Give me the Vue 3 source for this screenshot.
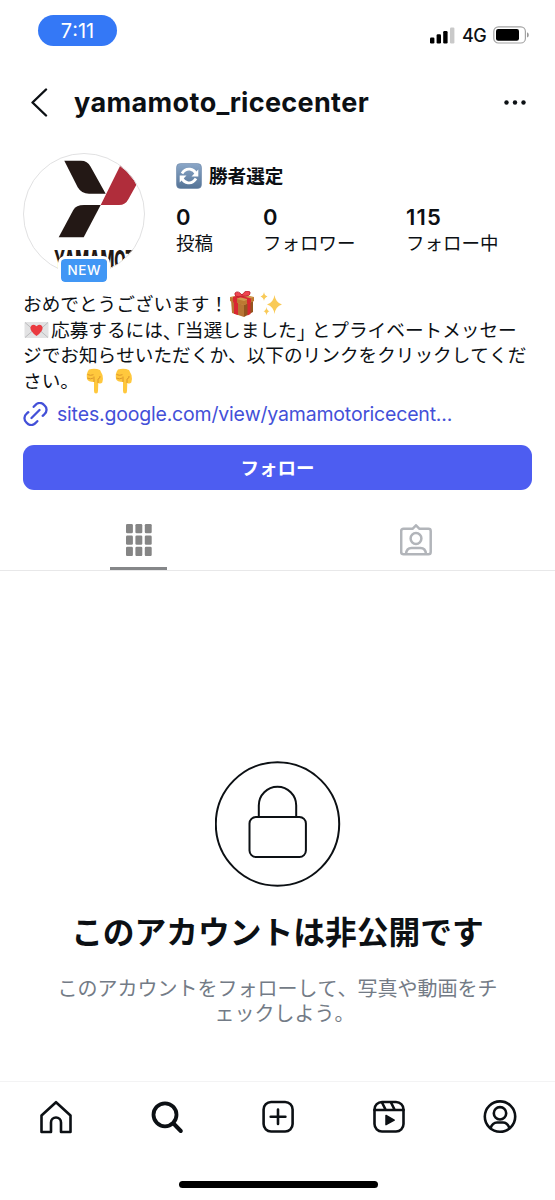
<script setup>
const stats = [
  { value: '0', label: '投稿', cls: 'posts' },
  { value: '0', label: 'フォロワー', cls: 'followers' },
  { value: '115', label: 'フォロー中', cls: 'following' },
]
const cells = [0, 1, 2].flatMap((r) => [0, 1, 2].map((c) => ({ x: c * 9.4, y: r * 11.4 })))
</script>

<template>
  <main class="screen">
    <div class="status">
      <span class="clock">7:11</span>
      <div class="signals">
        <svg class="bars" width="25" height="17" viewBox="0 0 25 17">
          <rect x="0" y="10.5" width="4.4" height="6" rx="1.2" />
          <rect x="6.6" y="7.3" width="4.4" height="9.2" rx="1.2" />
          <rect x="13.2" y="4" width="4.4" height="12.5" rx="1.2" />
          <rect x="20" y="0.5" width="4.4" height="16" rx="1.2" fill="#c9c9c9" />
        </svg>
        <span class="net">4G</span>
        <svg width="37" height="18" viewBox="0 0 37 18">
          <rect x="0.8" y="0.8" width="31.6" height="16.2" rx="4.6" fill="none" stroke="#a3a3a3" stroke-width="1.2" />
          <rect x="3" y="3" width="23" height="11.8" rx="2.2" />
          <path d="M34 6.2q1.8.7 1.8 2.7T34 11.6z" fill="#999" />
        </svg>
      </div>
    </div>

    <header class="head">
      <svg width="18" height="30" viewBox="0 0 18 30" fill="none" stroke="#0c1014" stroke-width="2.4" stroke-linecap="round" stroke-linejoin="round">
        <path d="M15 1.500 1.500 14.500l13.500 13" />
      </svg>
      <h1>yamamoto_ricecenter</h1>
      <svg class="more" width="24" height="6" viewBox="0 0 24 6" fill="#0c1014">
        <circle cx="3.500" cy="2.500" r="2.200" /><circle cx="12" cy="2.500" r="2.200" /><circle cx="20.500" cy="2.500" r="2.200" />
      </svg>
    </header>

    <section class="profile">
      <div class="avatar">
        <svg width="122" height="122" viewBox="0 0 122 122">
          <defs><clipPath id="round"><circle cx="61" cy="61" r="60.500" /></clipPath></defs>
          <g clip-path="url(#round)">
            <path d="M41.300 7.700H58Q64.500 7.700 67.500 13.500L82.700 40.700H66Q58.500 40.700 54.700 34.200z" fill="#231815" />
            <path d="M61 52H77.700L60.700 84.300H35.700L50.300 57Q53 52 61 52z" fill="#231815" />
            <path d="M77.700 52 99 9 H126L105.500 46Q102.500 52 96 52z" fill="#b02d3b" />
            <text x="31" y="117" textLength="92" lengthAdjust="spacingAndGlyphs" class="brand">YAMAMOTO</text>
          </g>
          <circle cx="61" cy="61" r="60.500" fill="none" stroke="#e1e1e2" />
        </svg>
        <span class="badge">NEW</span>
      </div>
      <div class="facts">
        <div class="name">
          <svg width="26" height="26" viewBox="0 0 26 26">
            <defs><linearGradient id="blue" x2="0" y2="1"><stop stop-color="#8ba7c8" /><stop offset="1" stop-color="#547396" /></linearGradient></defs>
            <rect x=".5" y=".5" width="25" height="25" rx="4" fill="url(#blue)" stroke="#6b87a7" stroke-width=".6" />
            <g fill="none" stroke="#fff" stroke-width="2.800">
              <path d="M6 10.500Q9 5.500 14 6.200 18 6.800 20 10.500" /><path d="M20 15.500Q17 20.500 12 19.800 8 19.200 6 15.500" />
            </g>
            <path d="M22.300 6.500v7H15.500zM3.700 19.500v-7h6.800z" fill="#fff" />
          </svg>
          <b>勝者選定</b>
        </div>
        <div class="stats">
          <div v-for="s in stats" :key="s.cls" :class="s.cls"><strong>{{ s.value }}</strong><span>{{ s.label }}</span></div>
        </div>
      </div>
    </section>

    <section class="bio">
      <p class="line">
        おめでとうございます！
        <svg class="gift" width="26" height="26" viewBox="0 0 26 26">
          <path d="M2 9 15 12V26L3 22z" fill="#b87534" /><path d="m15 12 9-3v12l-9 5z" fill="#94551f" />
          <path d="M1 6 14 3l11 3v4l-10 4L1 10z" fill="#d29a50" /><path d="m1 6 14 4 10-4v4l-10 4L1 10z" fill="#bd7932" />
          <path d="m5 11 4 1v12l-4-1.300zM18.500 12l3-1v12l-3 1.500zM4 6l14-4 3 1.300L8 7.500v5l-4-1.300zM8 3.500l14 4v3.800l-4 1.500V8L6 5z" fill="#d92732" />
          <path d="M13 5Q5 7 6 2q3-3 7 2 4-6 8-3 1 5-8 4" fill="#f04550" stroke="#b41f2a" stroke-width=".8" />
        </svg>
        <svg class="sparkle" width="23" height="24" viewBox="0 0 23 24" fill="#f9ca57">
          <path d="M14.500 3q1 7.500 7.500 9.500-6.500 2-7.500 9.500-1-7.500-7.500-9.500Q13.500 10.500 14.500 3zM4 0q.4 3.500 3.500 4.500Q4.400 5.500 4 9 3.600 5.500.5 4.500 3.600 3.500 4 0zM6.500 15q.3 3.500 3 4.300-2.700.7-3 4.200-.3-3.500-3-4.200 2.700-.8 3-4.300z" />
        </svg>
      </p>
      <p class="line">
        <svg class="letter" width="25" height="18" viewBox="0 0 25 18">
          <rect x=".5" y="1" width="24" height="16" rx="1" fill="#e2e2e3" />
          <path d="m1 1.500 11.500 10 11.500-10M1 16.500l8-7M24 16.500l-8-7" fill="none" stroke="#bcbcbe" />
          <path d="M12.500 15Q5.500 10 6.500 6q2-4 6-.7 4-3.300 6 .7 1 4-6 9z" fill="#ea3a40" />
        </svg><span>応募するには</span><span class="comma">、</span><span class="open">「</span><span>当選しました</span><span class="close">」</span><span>とプライベートメッセー</span>
      </p>
      <p class="line"><span>ジでお知らせいただくか、以下のリンクをクリックしてくだ</span></p>
      <p class="line">
        さい。
        <svg v-for="n in 2" :key="n" class="hand" width="18" height="26" viewBox="0 0 18 26">
          <path d="M3 1.500Q9 0 14 2l2.500 5q1 4-.2 7.500-1.800 1.800-4 .5L12 23q0 2.500-2 2.500T8 23V14Q2 14 1 11 0 5 3 1.500z" fill="#ffc83d" />
          <path d="M1.500 6.500q3 1.500 6 .2M1.300 10q3 1.700 6.200 0M8 14V8.500M12 15v-4q2.500-.5 2-3" fill="none" stroke="#dc962c" stroke-width="1" />
        </svg>
      </p>
      <a class="link">
        <svg width="25" height="24" viewBox="0 0 24 24" fill="none" stroke="#4350d8" stroke-width="2.300" stroke-linecap="round">
          <path d="m8 16 8-8M10.200 4.800l1.500-1.600a5.700 5.700 0 0 1 8.900-.2l.4.400a5.700 5.700 0 0 1-.2 8.900l-1.600 1.500M13.800 19.200l-1.500 1.600a5.700 5.700 0 0 1-8.900.2L3 20.600a5.700 5.700 0 0 1 .2-8.900l1.600-1.500" />
        </svg>
        <span>sites.google.com/view/yamamotoricecent...</span>
      </a>
    </section>

    <button class="follow">フォロー</button>

    <div class="tabs">
      <div class="tab active">
        <svg width="26" height="32" viewBox="0 0 26 32" fill="#858585">
          <rect v-for="(c, i) in cells" :key="i" :x="c.x" :y="c.y" width="6.900" height="9.300" rx="1.300" />
        </svg>
      </div>
      <div class="tab">
        <svg width="32" height="32" viewBox="0 0 32 32" fill="none" stroke="#b2b5ba" stroke-width="2.500" stroke-linejoin="round">
          <path d="M3.500 4.800h9L16 1.300l3.500 3.500h9q2.200 0 2.200 2.200v21q0 2.300-2.200 2.300h-25Q1.200 30.300 1.200 28V7q0-2.200 2.300-2.200z" />
          <circle cx="16" cy="14.500" r="5.400" /><path d="M6 30q.5-6 5.500-6h9q5 0 5.500 6" />
        </svg>
      </div>
    </div>

    <section class="private">
      <svg width="126" height="126" viewBox="0 0 126 126" fill="none" stroke="#0c1014" stroke-width="2">
        <circle cx="62.500" cy="63" r="61.700" />
        <rect x="34.500" y="56" width="56.400" height="40" rx="6.500" />
        <path d="M43.800 56V44.500a18.700 18.700 0 0 1 37.400 0V56" />
      </svg>
      <h2>このアカウントは非公開です</h2>
      <p>このアカウントをフォローして、写真や動画をチ</p>
      <p class="second">ェックしよう。</p>
    </section>

    <nav class="nav">
      <svg viewBox="0 0 34 34"><path d="M2.500 32V15.500L17 2.200l14.500 13.300V32H22V22.500a5 5 0 0 0-10 0V32z" /></svg>
      <svg viewBox="0 0 34 34"><circle cx="15" cy="14.800" r="11.500" stroke-width="3.800" /><path d="m23.500 23.500 7.300 7.500" stroke-width="4" /></svg>
      <svg viewBox="0 0 34 34"><rect x="2.600" y="2" width="29" height="29.500" rx="7.500" /><path d="M17 9.500v14.500M9.700 16.700h14.700" /></svg>
      <svg viewBox="0 0 34 34"><rect x="2.500" y="2" width="29" height="29.500" rx="7.500" /><path d="M2.500 10h29M10 2.500l3.500 7M19 2.500l3.500 7" /><path d="m14 15.500 8.200 4.600-8.200 4.600z" fill="#0c1014" stroke-width="1.500" /></svg>
      <svg viewBox="0 0 34 34"><circle cx="17" cy="16.600" r="15.200" /><circle cx="17" cy="13.300" r="6.200" /><path d="M7.500 28.200q2-5.700 6.500-5.700h6q4.500 0 6.500 5.700" /></svg>
    </nav>
    <div class="homebar"></div>
  </main>
</template>

<style>
body { margin: 0; background: #fff; }
</style>

<style scoped>
* { box-sizing: border-box; }
svg { display: block; flex: none; }
p, h1, h2 { margin: 0; }
.screen {
  width: 555px; height: 1200px; overflow: hidden; display: flex; flex-direction: column;
  background: #fff; color: #0c1014; font-family: Inter, "Noto Sans CJK JP", sans-serif;
  text-spacing-trim: space-all; font-kerning: none;
}
.status { height: 67px; padding: 15px 25px 0 38px; display: flex; justify-content: space-between; align-items: flex-start; flex: none; }
.clock { width: 79px; height: 31px; border-radius: 16px; background: #3478f6; color: #fff; font-size: 20px; line-height: 32px; text-align: center; }
.signals { display: flex; align-items: center; margin-top: 11px; height: 18px; }
.net { width: 25px; margin: 2px 6px 0 7px; font-size: 18px; line-height: 18px; font-weight: 500; white-space: nowrap; letter-spacing: -.5px; }
.head { height: 72px; flex: none; display: flex; align-items: center; padding: 0 28px 0 31px; }
h1 { margin-left: 25px; font-size: 27px; line-height: 36px; font-weight: 700; white-space: nowrap; letter-spacing: .33px; }
.more { margin-left: auto; }
.profile { display: flex; height: 151px; flex: none; padding: 14px 0 0 23px; }
.avatar { position: relative; width: 122px; height: 122px; }
.brand { font: 800 27px Inter, sans-serif; fill: #231815; }
.badge { position: absolute; left: 36px; top: 104px; width: 50px; height: 27px; border: 2px solid #fff; border-radius: 6px; background: #4197f5; background-clip: padding-box; color: #fff; font-size: 13.5px; line-height: 23px; font-weight: 500; text-align: center; letter-spacing: .6px; box-shadow: 0 0 0 1px #fff; text-indent: .5px; }
.facts { margin-left: 31px; padding-top: 10px; }
.name { display: flex; height: 26px; align-items: center; }
.name b { margin-left: 7px; font-size: 18.600px; line-height: 26px; font-weight: 700; }
.stats { display: flex; margin-top: 15px; }
.stats div { display: flex; flex-direction: column; }
.stats strong { font-size: 22px; line-height: 26px; font-weight: 600; }
.stats span { font-size: 18.500px; line-height: 26px; }
.posts { width: 87px; }
.followers { width: 143px; }
.following strong { letter-spacing: 1.200px; }
.bio { height: 155px; flex: none; padding: 2px 0 0 23px; font-size: 18.650px; }
.line { height: 25.700px; line-height: 25.700px; display: flex; align-items: center; white-space: nowrap; }
.line svg { margin-bottom: 2px; }
.gift { margin-left: 1px; }
.sparkle { margin-left: 5px; }
.letter { margin-left: 1px; margin-right: 2px; }
.comma, .open, .close { font-family: "Noto Sans CJK JP", sans-serif; font-feature-settings: "halt"; }
.comma { width: 13px; }
.open { width: 9px; }
.close { width: 15px; }
.hand { margin-left: 7px; }
.hand + .hand { margin-left: 11px; }
.link { display: flex; align-items: center; height: 36px; margin-top: 1px; color: #4350d8; }
.link span { margin-left: 9px; font-size: 19.500px; letter-spacing: -.2px; }
.follow { flex: none; width: 509px; height: 45px; margin-left: 23px; border: 0; border-radius: 11px; background: #4d5df1; color: #fff; font: 700 18.500px/45px "Noto Sans CJK JP", sans-serif; padding: 0; }
.tabs { flex: none; height: 81px; display: flex; border-bottom: 1px solid #e8e8e9; }
.tab { flex: 1; display: flex; flex-direction: column; align-items: center; padding-top: 34px; }
.active::after { content: ""; width: 57px; height: 3.500px; margin-top: auto; background: #858789; }
.private { height: 510px; flex: none; display: flex; flex-direction: column; align-items: center; padding-top: 190px; }
h2 { margin-top: 22px; font-size: 31.750px; line-height: 48px; font-weight: 700; white-space: nowrap; position: relative; }
.private p { font-size: 20px; line-height: 25.500px; margin-top: 19.500px; color: #737b86; white-space: nowrap; }
.private .second { margin-top: 0; padding-left: 14px; }
.nav { height: 100px; flex: none; display: flex; border-top: 1px solid #f3f3f4; padding: 18px 0 0; justify-content: space-around; }
.nav svg { width: 34px; height: 34px; fill: none; stroke: #0c1014; stroke-width: 2.600; stroke-linecap: round; stroke-linejoin: round; }
.homebar { flex: none; width: 199px; height: 7px; margin-left: 178.500px; border-radius: 4px; background: #000; }
</style>
